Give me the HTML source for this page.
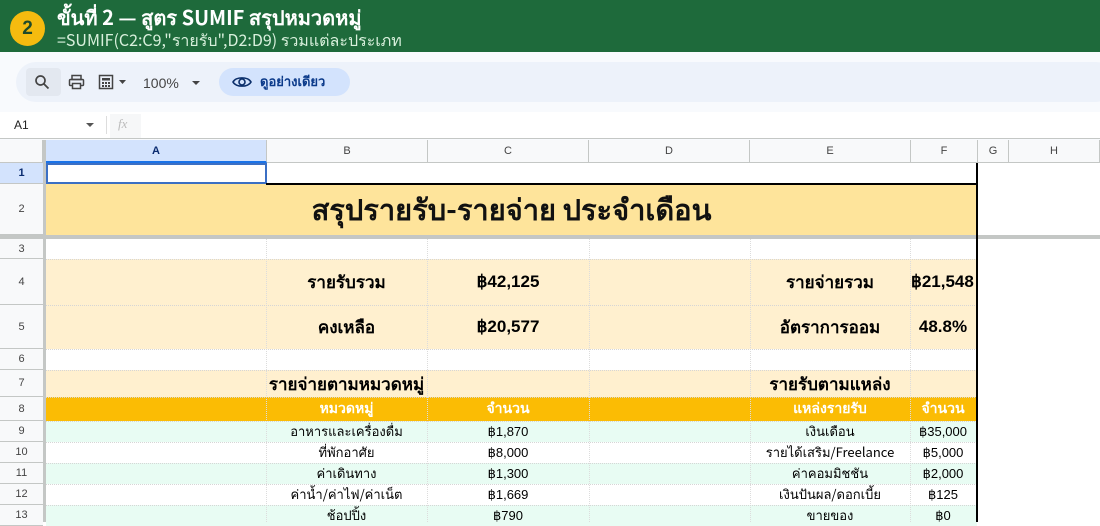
<!DOCTYPE html>
<html><head><meta charset="utf-8"><style>
*{margin:0;padding:0;box-sizing:border-box}
body{width:1100px;height:522px;overflow:hidden;background:#fff;font-family:"Liberation Sans","Noto Sans CJK SC",sans-serif;position:relative}
.a{position:absolute}
.t{font-family:"Noto Sans CJK SC","Liberation Sans",sans-serif}
.c{position:absolute;display:flex;align-items:center;justify-content:center;white-space:nowrap;overflow:visible}
.rh{position:absolute;left:0;width:43px;background:#f8f9fa;border-bottom:1px solid #c4c7c5;font-size:11px;color:#444;display:flex;align-items:center;justify-content:center}
.ch{position:absolute;top:140px;height:23px;border-right:1px solid #c4c7c5;border-bottom:1px solid #c4c7c5;font-size:11px;color:#444;display:flex;align-items:center;justify-content:center;background:#f8f9fa}
.vl{position:absolute;width:0;border-left:1px dotted #dcdcdc}
.hl{position:absolute;height:0;border-top:1px dotted #d6d6d6;left:46px;width:931px}
.d{font-size:13px}
</style></head><body>
<div class="a" style="left:0;top:0;width:1100px;height:52px;background:#1e6a3b"></div>
<div class="a" style="left:10px;top:11px;width:35px;height:35px;border-radius:50%;background:#f5bb0f;color:#1e4a2a;font-size:19px;font-weight:bold;display:flex;align-items:center;justify-content:center">2</div>
<div class="a t" style="left:57px;top:4px;color:#fff;font-size:20px;font-weight:bold;line-height:26px">ขั้นที่ 2 — สูตร SUMIF สรุปหมวดหมู่</div>
<div class="a t" style="left:57px;top:29px;color:#d8f0dc;font-size:16px;line-height:20px">=SUMIF(C2:C9,"รายรับ",D2:D9) รวมแต่ละประเภท</div>

<div class="a" style="left:0;top:52px;width:1100px;height:88px;background:#f8fafd"></div>
<div class="a" style="left:16px;top:62px;width:1100px;height:40px;border-radius:20px;background:#edf2fa"></div>
<div class="a" style="left:26px;top:68px;width:35px;height:28px;background:#e3e8f0;border-radius:4px"></div>
<svg class="a" style="left:34px;top:74px" width="16" height="16" viewBox="0 0 16 16"><circle cx="6.5" cy="6.5" r="4.5" fill="none" stroke="#444" stroke-width="1.7"/><line x1="10" y1="10" x2="14.5" y2="14.5" stroke="#444" stroke-width="1.8"/></svg>
<svg class="a" style="left:68px;top:74px" width="17" height="16" viewBox="0 0 17 16"><rect x="4" y="1.5" width="9" height="4" fill="none" stroke="#444" stroke-width="1.5"/><rect x="1.5" y="5.5" width="14" height="6" rx="1" fill="none" stroke="#444" stroke-width="1.5"/><rect x="4.5" y="9.5" width="8" height="5" fill="#edf2fa" stroke="#444" stroke-width="1.5"/></svg>
<svg class="a" style="left:98px;top:74px" width="32" height="16" viewBox="0 0 32 16"><rect x="1.5" y="1.5" width="13" height="13" fill="none" stroke="#444" stroke-width="1.5"/><rect x="4" y="4" width="8" height="2.5" fill="#444"/><g fill="#444"><rect x="4" y="8" width="2" height="2"/><rect x="7" y="8" width="2" height="2"/><rect x="10" y="8" width="2" height="2"/><rect x="4" y="11" width="2" height="2"/><rect x="7" y="11" width="2" height="2"/><rect x="10" y="11" width="2" height="2"/></g><path d="M21 6l3.5 4 3.5-4z" fill="#444"/></svg>
<div class="a" style="left:143px;top:75px;font-size:14px;color:#444">100%</div>
<svg class="a" style="left:191px;top:80px" width="10" height="6"><path d="M1 1h8l-4 4z" fill="#444"/></svg>
<div class="a" style="left:219px;top:68px;width:131px;height:28px;border-radius:14px;background:#d3e3fd"></div>
<svg class="a" style="left:232px;top:75px" width="20" height="14" viewBox="0 0 20 14"><path d="M1 7C4 1.5 16 1.5 19 7C16 12.5 4 12.5 1 7z" fill="none" stroke="#0b2f6b" stroke-width="1.6"/><circle cx="10" cy="7" r="3" fill="none" stroke="#0b2f6b" stroke-width="1.6"/></svg>
<div class="a t" style="left:260px;top:72px;font-size:13px;font-weight:bold;color:#0b3a8a;line-height:18px">ดูอย่างเดียว</div>

<div class="a" style="left:0;top:112px;width:1100px;height:27px;background:#fff;border-bottom:1px solid #c4c7c5"></div>
<div class="a" style="left:14px;top:118px;font-size:12px;color:#222">A1</div>
<svg class="a" style="left:86px;top:123px" width="8" height="5"><path d="M0 0h8l-4 4z" fill="#555"/></svg>
<div class="a" style="left:106px;top:116px;width:1px;height:18px;background:#ddd"></div>
<div class="a" style="left:110px;top:114px;width:31px;height:24px;background:#f6f7f8"></div>
<div class="a" style="left:118px;top:116px;font-size:13px;font-style:italic;color:#bbb;font-family:'Liberation Serif',serif">fx</div>

<div class="a" style="left:0;top:140px;width:46px;height:23px;background:#f8f9fa;border-bottom:1px solid #c4c7c5"></div>
<div class="a" style="left:42px;top:140px;width:4px;height:382px;background:#c4c7c5"></div>
<div class="ch" style="left:46px;width:221px;background:#d3e3fd;color:#0b2c70;font-weight:bold;border-bottom:2px solid #1a73e8">A</div>
<div class="ch" style="left:267px;width:161px">B</div>
<div class="ch" style="left:428px;width:161px">C</div>
<div class="ch" style="left:589px;width:161px">D</div>
<div class="ch" style="left:750px;width:161px">E</div>
<div class="ch" style="left:911px;width:67px">F</div>
<div class="ch" style="left:978px;width:31px">G</div>
<div class="ch" style="left:1009px;width:91px">H</div>

<div class="rh" style="top:163px;height:21px;background:#d3e3fd;color:#0b2c70;font-weight:bold">1</div>
<div class="rh" style="top:184px;height:51px">2</div>
<div class="a" style="left:0;top:235px;width:1100px;height:4px;background:#c4c7c5"></div>
<div class="rh" style="top:239px;height:20px">3</div>
<div class="rh" style="top:259px;height:46px">4</div>
<div class="rh" style="top:305px;height:44px">5</div>
<div class="rh" style="top:349px;height:21px">6</div>
<div class="rh" style="top:370px;height:27px">7</div>
<div class="rh" style="top:397px;height:24px">8</div>
<div class="rh" style="top:421px;height:21px">9</div>
<div class="rh" style="top:442px;height:21px">10</div>
<div class="rh" style="top:463px;height:21px">11</div>
<div class="rh" style="top:484px;height:21px">12</div>
<div class="rh" style="top:505px;height:21px">13</div>

<div class="a" style="left:46px;top:184px;width:931px;height:51px;background:#fee49b"></div>
<div class="a" style="left:46px;top:259px;width:931px;height:90px;background:#fff0cf"></div>
<div class="a" style="left:46px;top:370px;width:931px;height:27px;background:#fff0cf"></div>
<div class="a" style="left:46px;top:397px;width:931px;height:24px;background:#fbbc04"></div>
<div class="a" style="left:46px;top:421px;width:931px;height:21px;background:#e8fcf3"></div>
<div class="a" style="left:46px;top:463px;width:931px;height:21px;background:#e8fcf3"></div>
<div class="a" style="left:46px;top:505px;width:931px;height:21px;background:#e8fcf3"></div>

<div class="vl" style="left:266px;top:163px;height:21px;border-left:1px solid #e0e0e0"></div>
<div class="vl" style="left:266px;top:239px;height:283px"></div>
<div class="vl" style="left:427px;top:239px;height:283px"></div>
<div class="vl" style="left:589px;top:239px;height:283px"></div>
<div class="vl" style="left:750px;top:239px;height:283px"></div>
<div class="vl" style="left:910px;top:239px;height:283px"></div>
<div class="hl" style="top:259px"></div><div class="hl" style="top:305px"></div><div class="hl" style="top:349px"></div><div class="hl" style="top:370px"></div><div class="hl" style="top:397px"></div><div class="hl" style="top:421px"></div><div class="hl" style="top:442px"></div><div class="hl" style="top:463px"></div><div class="hl" style="top:484px"></div><div class="hl" style="top:505px"></div>
<div class="a" style="left:46px;top:163px;width:221px;height:21px;border:2px solid #3b6fc4"></div>
<div class="a" style="left:266px;top:183px;width:712px;height:2px;background:#000"></div>
<div class="a" style="left:976px;top:163px;width:2px;height:359px;background:#000"></div>

<div class="c t" style="left:46px;top:184px;width:931px;height:51px;font-size:29px;font-weight:bold;color:#111">สรุปรายรับ-รายจ่าย ประจำเดือน</div>
<div class="c t" style="left:266px;top:259px;width:161px;height:46px;font-size:17px;font-weight:bold">รายรับรวม</div>
<div class="c" style="left:427px;top:259px;width:162px;height:46px;font-size:17px;font-weight:bold">฿42,125</div>
<div class="c t" style="left:750px;top:259px;width:160px;height:46px;font-size:17px;font-weight:bold">รายจ่ายรวม</div>
<div class="a" style="left:911px;top:259px;width:65px;height:46px;overflow:hidden;display:flex;align-items:center;font-size:17px;font-weight:bold;white-space:nowrap">฿21,548</div>
<div class="c t" style="left:266px;top:305px;width:161px;height:44px;font-size:17px;font-weight:bold">คงเหลือ</div>
<div class="c" style="left:427px;top:305px;width:162px;height:44px;font-size:17px;font-weight:bold">฿20,577</div>
<div class="c t" style="left:750px;top:305px;width:160px;height:44px;font-size:17px;font-weight:bold">อัตราการออม</div>
<div class="c" style="left:910px;top:305px;width:66px;height:44px;font-size:17px;font-weight:bold">48.8%</div>
<div class="c t" style="left:266px;top:370px;width:161px;height:27px;font-size:17px;font-weight:bold">รายจ่ายตามหมวดหมู่</div>
<div class="c t" style="left:750px;top:370px;width:160px;height:27px;font-size:17px;font-weight:bold">รายรับตามแหล่ง</div>
<div class="c t" style="left:266px;top:397px;width:161px;height:24px;font-size:14px;font-weight:bold;color:#fff">หมวดหมู่</div>
<div class="c t" style="left:427px;top:397px;width:162px;height:24px;font-size:14px;font-weight:bold;color:#fff">จำนวน</div>
<div class="c t" style="left:750px;top:397px;width:160px;height:24px;font-size:14px;font-weight:bold;color:#fff">แหล่งรายรับ</div>
<div class="c t" style="left:910px;top:397px;width:66px;height:24px;font-size:14px;font-weight:bold;color:#fff">จำนวน</div>

<div class="c t d" style="left:266px;top:421px;width:161px;height:21px">อาหารและเครื่องดื่ม</div>
<div class="c d" style="left:427px;top:421px;width:162px;height:21px">฿1,870</div>
<div class="c t d" style="left:266px;top:442px;width:161px;height:21px">ที่พักอาศัย</div>
<div class="c d" style="left:427px;top:442px;width:162px;height:21px">฿8,000</div>
<div class="c t d" style="left:266px;top:463px;width:161px;height:21px">ค่าเดินทาง</div>
<div class="c d" style="left:427px;top:463px;width:162px;height:21px">฿1,300</div>
<div class="c t d" style="left:266px;top:484px;width:161px;height:21px">ค่าน้ำ/ค่าไฟ/ค่าเน็ต</div>
<div class="c d" style="left:427px;top:484px;width:162px;height:21px">฿1,669</div>
<div class="c t d" style="left:266px;top:505px;width:161px;height:21px">ช้อปปิ้ง</div>
<div class="c d" style="left:427px;top:505px;width:162px;height:21px">฿790</div>

<div class="c t d" style="left:750px;top:421px;width:160px;height:21px">เงินเดือน</div>
<div class="c d" style="left:910px;top:421px;width:66px;height:21px">฿35,000</div>
<div class="c t d" style="left:750px;top:442px;width:160px;height:21px">รายได้เสริม/Freelance</div>
<div class="c d" style="left:910px;top:442px;width:66px;height:21px">฿5,000</div>
<div class="c t d" style="left:750px;top:463px;width:160px;height:21px">ค่าคอมมิชชัน</div>
<div class="c d" style="left:910px;top:463px;width:66px;height:21px">฿2,000</div>
<div class="c t d" style="left:750px;top:484px;width:160px;height:21px">เงินปันผล/ดอกเบี้ย</div>
<div class="c d" style="left:910px;top:484px;width:66px;height:21px">฿125</div>
<div class="c t d" style="left:750px;top:505px;width:160px;height:21px">ขายของ</div>
<div class="c d" style="left:910px;top:505px;width:66px;height:21px">฿0</div>
</body></html>
